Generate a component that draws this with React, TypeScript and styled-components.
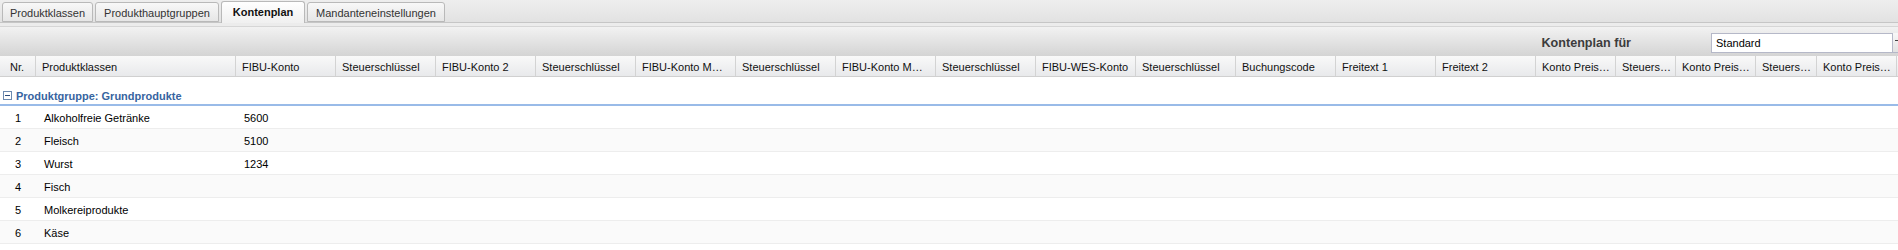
import styled, { createGlobalStyle } from "styled-components";

const GlobalStyle = createGlobalStyle`
  html, body {
    margin: 0;
    padding: 0;
    background: #ffffff;
    overflow: hidden;
  }
  body {
    font-family: "Liberation Sans", Arial, sans-serif;
    font-size: 11px;
    color: #000;
  }
`;

const Page = styled.div`
  width: 1898px;
  height: 250px;
  overflow: hidden;
  background: #fff;
`;

const TabStrip = styled.div`
  height: 23px;
  box-sizing: border-box;
  display: flex;
  align-items: flex-end;
  gap: 2px;
  padding-left: 2px;
  background: linear-gradient(#eeeeee, #e2e2e2);
  border-bottom: 1px solid #c6c6c6;
`;

const Tab = styled.div<{ active?: boolean; w: number }>`
  width: ${(p) => p.w}px;
  height: ${(p) => (p.active ? 22 : 20)}px;
  box-sizing: border-box;
  margin-bottom: ${(p) => (p.active ? -1 : 0)}px;
  display: flex;
  justify-content: center;
  align-items: flex-start;
  padding-top: 4px;
  border: 1px solid #b9b9b9;
  border-bottom: ${(p) => (p.active ? "none" : "1px solid #b9b9b9")};
  border-radius: 3px 3px 0 0;
  background: ${(p) =>
    p.active
      ? "linear-gradient(#ffffff, #f0f0f0)"
      : "linear-gradient(#f8f8f8, #e6e6e6)"};
  color: ${(p) => (p.active ? "#111" : "#333")};
  font-weight: ${(p) => (p.active ? "bold" : "normal")};
  white-space: nowrap;
`;

const TabBand = styled.div`
  height: 3px;
  background: #ececec;
`;

const Toolbar = styled.div`
  height: 30px;
  box-sizing: border-box;
  display: flex;
  justify-content: flex-end;
  align-items: center;
  padding-top: 2px;
  background: linear-gradient(#f2f2f2, #d4d4d4);
  border-top: 1px solid #d6d6d6;
`;

const ToolLabel = styled.div`
  font-size: 12.6px;
  font-weight: bold;
  color: #3c3c3c;
  margin-right: 80px;
  padding-top: 1px;
`;

const Combo = styled.div`
  display: flex;
  margin-right: -12px;
`;

const ComboInput = styled.div`
  width: 182px;
  height: 20px;
  box-sizing: border-box;
  border: 1px solid #b5b8c8;
  background: #fff;
  padding: 3px 4px 0;
  font-size: 11px;
`;

const ComboTrigger = styled.div`
  width: 17px;
  height: 20px;
  box-sizing: border-box;
  border-bottom: 1px solid #b5b8c8;
  background: linear-gradient(#f8f8f8, #e2e2e2);
  position: relative;
  &::after {
    content: "";
    position: absolute;
    left: 2px;
    top: 7px;
    width: 5px;
    height: 1px;
    background: #444;
  }
`;

const HeaderRow = styled.div`
  display: flex;
  height: 21px;
  box-sizing: border-box;
  background: linear-gradient(#f9f9f9, #e8e9eb);
  border-bottom: 1px solid #d0d0d0;
`;

const HeadCell = styled.div<{ w: number; first?: boolean }>`
  width: ${(p) => p.w}px;
  flex: none;
  box-sizing: border-box;
  border-right: 1px solid #d3d3d3;
  padding: 1px 3px 0 ${(p) => (p.first ? 10 : 6)}px;
  display: flex;
  align-items: center;
  white-space: nowrap;
  overflow: hidden;
  color: #111;
`;

const GroupRow = styled.div`
  height: 29px;
  box-sizing: border-box;
  display: flex;
  align-items: center;
  padding: 10px 0 0 3px;
  border-bottom: 2px solid #99bbe8;
  color: #3764a0;
  font-weight: bold;
  font-size: 11px;
  gap: 4px;
`;

const Row = styled.div<{ alt: boolean }>`
  display: flex;
  height: 23px;
  box-sizing: border-box;
  background: ${(p) => (p.alt ? "#fafafa" : "#ffffff")};
  border-bottom: 1px solid #ededed;
`;

const Cell = styled.div<{ w: number; center?: boolean }>`
  width: ${(p) => p.w}px;
  flex: none;
  box-sizing: border-box;
  padding-left: ${(p) => (p.center ? 0 : 8)}px;
  padding-top: 1px;
  display: flex;
  align-items: center;
  justify-content: ${(p) => (p.center ? "center" : "flex-start")};
  white-space: nowrap;
  overflow: hidden;
`;

const columns = [
  { title: "Nr.", w: 36 },
  { title: "Produktklassen", w: 200 },
  { title: "FIBU-Konto", w: 100 },
  { title: "Steuerschlüssel", w: 100 },
  { title: "FIBU-Konto 2", w: 100 },
  { title: "Steuerschlüssel", w: 100 },
  { title: "FIBU-Konto M…", w: 100 },
  { title: "Steuerschlüssel", w: 100 },
  { title: "FIBU-Konto M…", w: 100 },
  { title: "Steuerschlüssel", w: 100 },
  { title: "FIBU-WES-Konto", w: 100 },
  { title: "Steuerschlüssel", w: 100 },
  { title: "Buchungscode", w: 100 },
  { title: "Freitext 1", w: 100 },
  { title: "Freitext 2", w: 100 },
  { title: "Konto Preis…", w: 80 },
  { title: "Steuers…", w: 60 },
  { title: "Konto Preis…", w: 80 },
  { title: "Steuers…", w: 61 },
  { title: "Konto Preis…", w: 80 },
];

const rows = [
  { nr: 1, name: "Alkoholfreie Getränke", konto: "5600" },
  { nr: 2, name: "Fleisch", konto: "5100" },
  { nr: 3, name: "Wurst", konto: "1234" },
  { nr: 4, name: "Fisch", konto: "" },
  { nr: 5, name: "Molkereiprodukte", konto: "" },
  { nr: 6, name: "Käse", konto: "" },
];

const tabs = [
  { label: "Produktklassen", w: 91 },
  { label: "Produkthauptgruppen", w: 124 },
  { label: "Kontenplan", w: 84, active: true },
  { label: "Mandanteneinstellungen", w: 138 },
];

function CollapseIcon() {
  return (
    <svg width="9" height="9" viewBox="0 0 9 9">
      <rect x="0.5" y="0.5" width="8" height="8" fill="#fff" stroke="#6d8ab0" />
      <rect x="2" y="4" width="5" height="1" fill="#2b4a7a" />
    </svg>
  );
}

export default function App() {
  return (
    <Page>
      <GlobalStyle />
      <TabStrip>
        {tabs.map((t) => (
          <Tab key={t.label} w={t.w} active={t.active}>
            {t.label}
          </Tab>
        ))}
      </TabStrip>
      <TabBand />
      <Toolbar>
        <ToolLabel>Kontenplan für</ToolLabel>
        <Combo>
          <ComboInput>Standard</ComboInput>
          <ComboTrigger />
        </Combo>
      </Toolbar>
      <HeaderRow>
        {columns.map((c, i) => (
          <HeadCell key={i} w={c.w} first={i === 0}>
            {c.title}
          </HeadCell>
        ))}
      </HeaderRow>
      <GroupRow>
        <CollapseIcon />
        <span>Produktgruppe: Grundprodukte</span>
      </GroupRow>
      {rows.map((r, idx) => (
        <Row key={r.nr} alt={idx % 2 === 1}>
          {columns.map((c, i) => (
            <Cell key={i} w={c.w} center={i === 0}>
              {i === 0 ? r.nr : i === 1 ? r.name : i === 2 ? r.konto : ""}
            </Cell>
          ))}
        </Row>
      ))}
    </Page>
  );
}
